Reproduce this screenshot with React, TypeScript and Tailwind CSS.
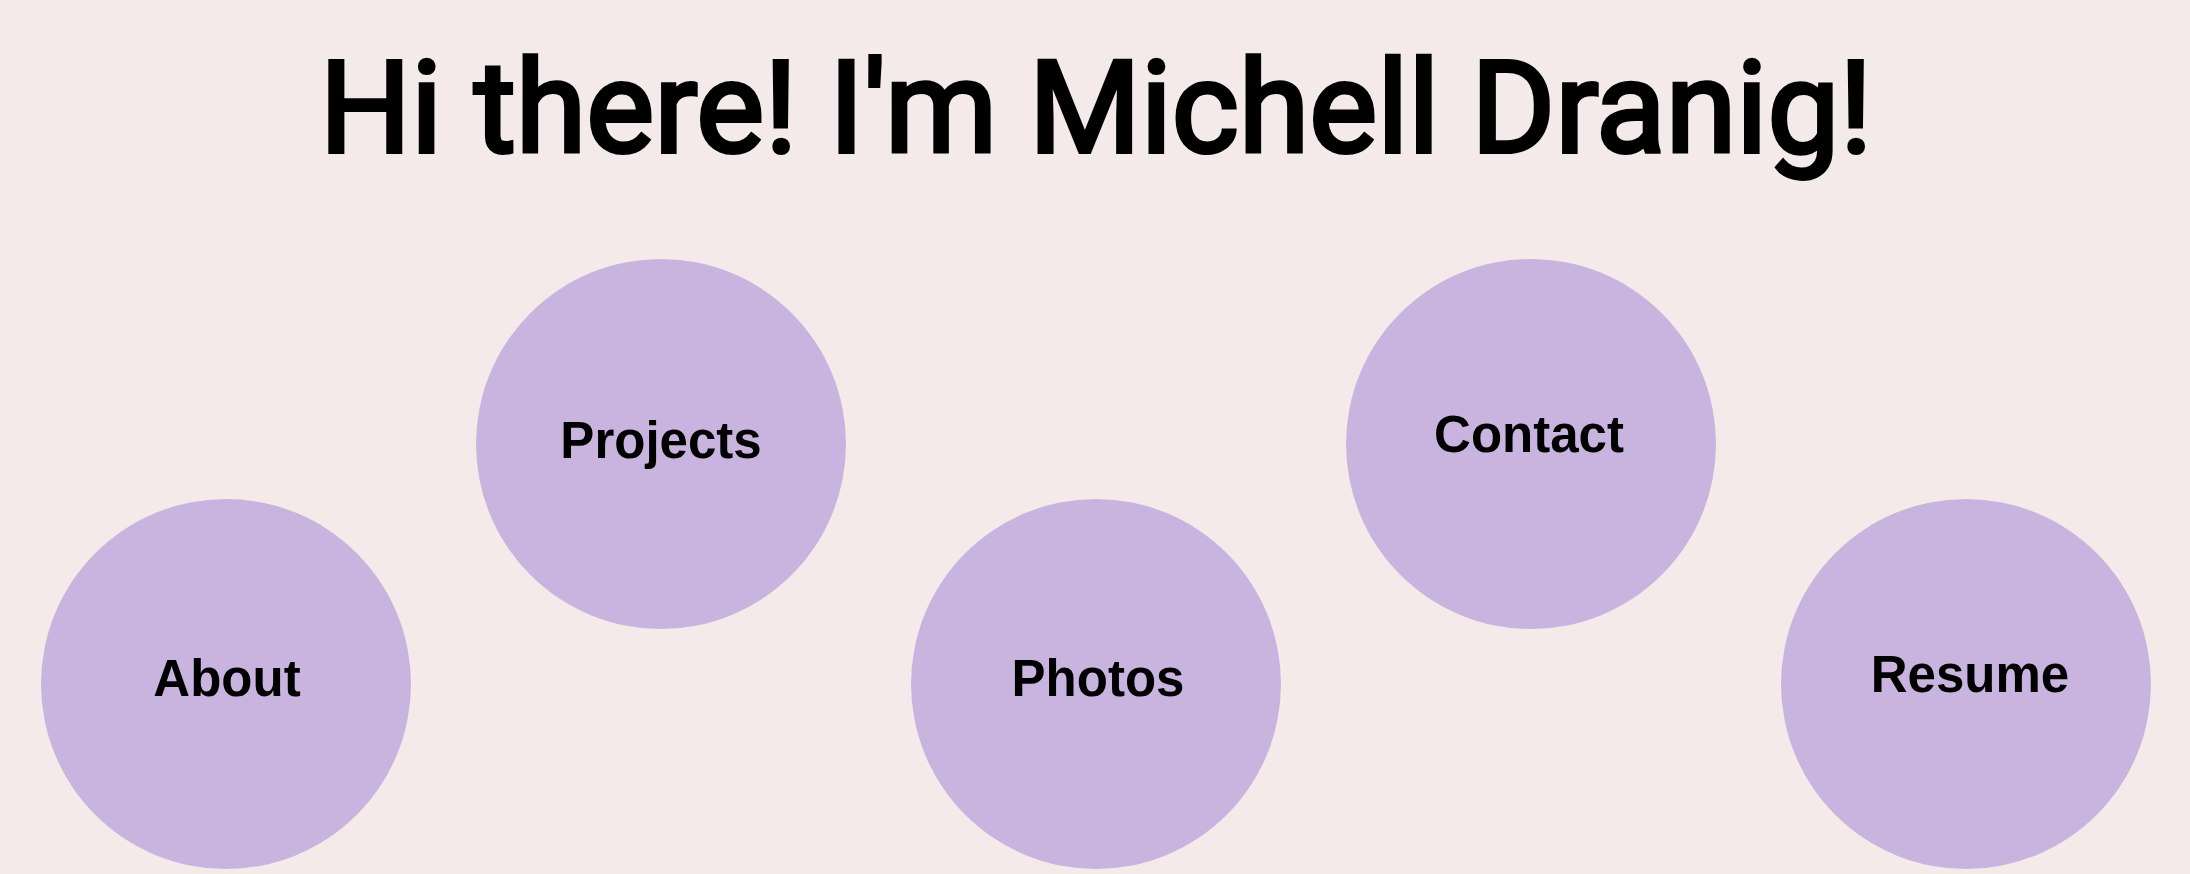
const links = [
  { label: "About", place: "mt-60", shift: "pb-2.5 pl-0.5" },
  { label: "Projects", place: "", shift: "pb-1.5" },
  { label: "Photos", place: "mt-60", shift: "pb-2.5 pl-1" },
  { label: "Contact", place: "", shift: "pb-4.5 pr-1" },
  { label: "Resume", place: "mt-60", shift: "pb-4.5 pl-2" },
];

export default function App() {
  return (
    <main className="min-h-screen bg-[#f4eae9] text-black">
      <h1 className="pt-8 pl-0.5 text-center font-['Roboto',sans-serif] text-[128px] leading-[152px] font-normal [-webkit-text-stroke:4px_black]">
        Hi there! I'm Michell Dranig!
      </h1>
      <nav aria-label="Main" className="flex items-start justify-between pt-[75px] pr-[39px] pl-[41px]">
        {links.map(({ label, place, shift }) => (
          <a
            key={label}
            href={`#${label.toLowerCase()}`}
            className={`flex size-[370px] items-center justify-center rounded-full bg-[#c8b4df] font-['Liberation_Sans',sans-serif] text-[51px] leading-[60px] font-bold ${place} ${shift}`}
          >
            {label}
          </a>
        ))}
      </nav>
    </main>
  );
}
